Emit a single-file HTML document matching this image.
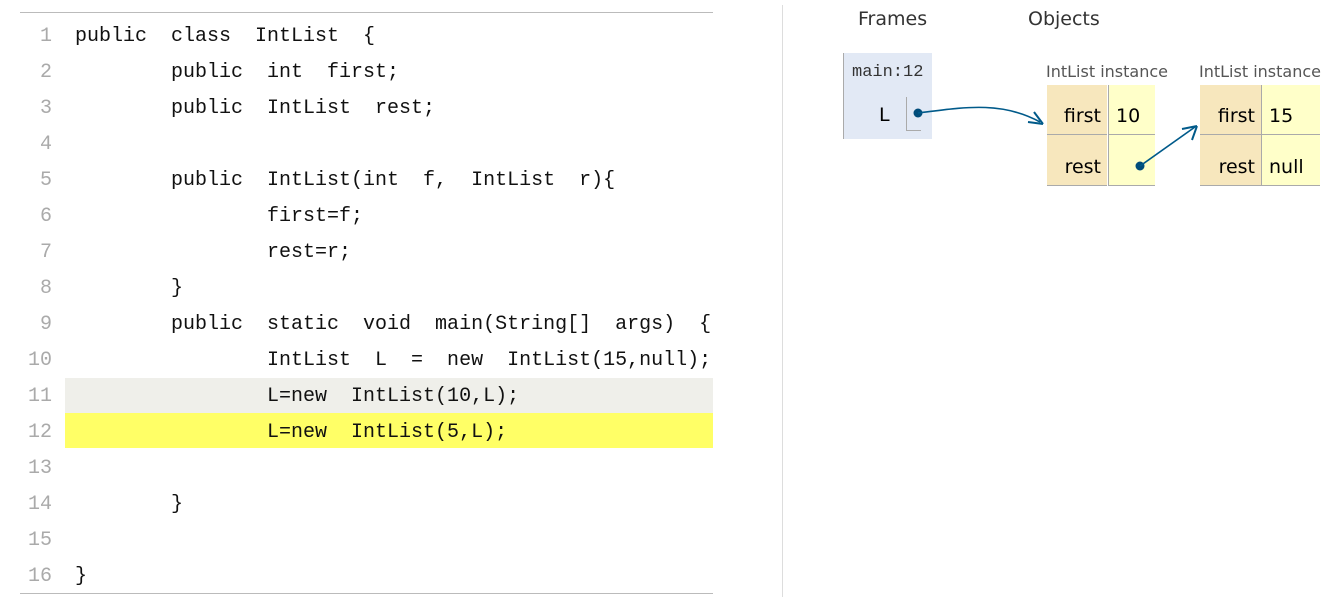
<!DOCTYPE html>
<html><head><meta charset="utf-8"><style>
body{margin:0;width:1338px;height:597px;background:#fff;position:relative;overflow:hidden;font-family:"DejaVu Sans","Liberation Sans",sans-serif}
.code{position:absolute;left:20px;top:12px;width:693px;height:580px;border-top:1px solid #bbb;border-bottom:1px solid #bbb}
.ln{position:absolute;left:0;width:693px;height:36px;line-height:36px;font-family:"Liberation Mono","Noto Serif CJK SC",monospace;font-size:20px;white-space:pre;color:#111}
.ln .n{position:absolute;left:0;width:32px;text-align:right;color:#aaa}
.ln .c{position:absolute;left:55px}
.hl{position:absolute;left:45px;width:648px;height:35px}
.a{position:absolute}
.cell{position:absolute;font-size:19px;color:#000;line-height:50px}
</style></head><body>
<div class="code">
<div class="hl" style="top:365px;background:#efefea"></div>
<div class="hl" style="top:400px;background:#ffff66"></div>
<div class="ln" style="top:6px"><span class="n">1</span><span class="c">public  class  IntList  {</span></div>
<div class="ln" style="top:42px"><span class="n">2</span><span class="c">        public  int  first;</span></div>
<div class="ln" style="top:78px"><span class="n">3</span><span class="c">        public  IntList  rest;</span></div>
<div class="ln" style="top:114px"><span class="n">4</span><span class="c"></span></div>
<div class="ln" style="top:150px"><span class="n">5</span><span class="c">        public  IntList(int  f,  IntList  r){</span></div>
<div class="ln" style="top:186px"><span class="n">6</span><span class="c">                first=f;</span></div>
<div class="ln" style="top:222px"><span class="n">7</span><span class="c">                rest=r;</span></div>
<div class="ln" style="top:258px"><span class="n">8</span><span class="c">        }</span></div>
<div class="ln" style="top:294px"><span class="n">9</span><span class="c">        public  static  void  main(String[]  args)  {</span></div>
<div class="ln" style="top:330px"><span class="n">10</span><span class="c">                IntList  L  =  new  IntList(15,null);</span></div>
<div class="ln" style="top:366px"><span class="n">11</span><span class="c">                L=new  IntList(10,L);</span></div>
<div class="ln" style="top:402px"><span class="n">12</span><span class="c">                L=new  IntList(5,L);</span></div>
<div class="ln" style="top:438px"><span class="n">13</span><span class="c"></span></div>
<div class="ln" style="top:474px"><span class="n">14</span><span class="c">        }</span></div>
<div class="ln" style="top:510px"><span class="n">15</span><span class="c"></span></div>
<div class="ln" style="top:546px"><span class="n">16</span><span class="c">}</span></div>
</div>
<div class="a" style="left:782px;top:5px;width:1px;height:592px;background:#ddd"></div>
<div class="a" style="left:858px;top:8px;font-size:19px;color:#333">Frames</div>
<div class="a" style="left:1028px;top:8px;font-size:19px;color:#333">Objects</div>
<div class="a" style="left:843px;top:53px;width:89px;height:86px;background:#e2e9f5;border-left:1px solid #aaa;box-sizing:border-box"></div>
<div class="a" style="left:852px;top:63px;font-family:'Liberation Mono',monospace;font-size:17px;color:#333">main:12</div>
<div class="a" style="left:879px;top:104px;font-size:19px">L</div>
<div class="a" style="left:906px;top:97px;width:14px;height:33px;border-left:1px solid #aaa;border-bottom:1px solid #aaa"></div>
<div class="a" style="left:1046px;top:62px;font-size:16px;color:#555">IntList instance</div>
<div class="a" style="left:1199px;top:62px;font-size:16px;color:#555">IntList instance</div>
<div class="a" style="left:1047px;top:85px;width:60px;height:49px;background:#f7e7bd;border-bottom:1px solid #aaa"></div>
<div class="a" style="left:1047px;top:135px;width:60px;height:50px;background:#f7e7bd;border-bottom:1px solid #aaa"></div>
<div class="a" style="left:1109px;top:85px;width:46px;height:49px;background:#ffffc9;border-bottom:1px solid #aaa;border-left:1px solid #aaa;margin-left:-1px"></div>
<div class="a" style="left:1109px;top:135px;width:46px;height:50px;background:#ffffc9;border-bottom:1px solid #aaa;border-left:1px solid #aaa;margin-left:-1px"></div>
<div class="a" style="left:1200px;top:85px;width:61px;height:49px;background:#f7e7bd;border-bottom:1px solid #aaa"></div>
<div class="a" style="left:1200px;top:135px;width:61px;height:50px;background:#f7e7bd;border-bottom:1px solid #aaa"></div>
<div class="a" style="left:1262px;top:85px;width:58px;height:49px;background:#ffffc9;border-bottom:1px solid #aaa;border-left:1px solid #aaa;margin-left:-1px"></div>
<div class="a" style="left:1262px;top:135px;width:58px;height:50px;background:#ffffc9;border-bottom:1px solid #aaa;border-left:1px solid #aaa;margin-left:-1px"></div>
<div class="cell" style="left:1047px;width:54px;text-align:right;top:91px">first</div>
<div class="cell" style="left:1047px;top:142px;width:54px;text-align:right">rest</div>
<div class="cell" style="left:1116px;top:91px">10</div>
<div class="cell" style="left:1200px;top:91px;width:55px;text-align:right">first</div>
<div class="cell" style="left:1200px;top:142px;width:55px;text-align:right">rest</div>
<div class="cell" style="left:1269px;top:91px">15</div>
<div class="cell" style="left:1269px;top:142px">null</div>
<svg class="a" style="left:0;top:0" width="1338" height="597">
<circle cx="918" cy="113" r="4.5" fill="#004c7a"/>
<path d="M918 113 C960 108 1000 100 1040 122" fill="none" stroke="#005a8a" stroke-width="1.6"/>
<path d="M1043 124 L1028 122 M1043 124 L1034 112" stroke="#005a8a" stroke-width="2" fill="none"/>
<circle cx="1140" cy="166" r="4.5" fill="#004c7a"/>
<path d="M1140 166 L1195 127" stroke="#005a8a" stroke-width="1.6"/>
<path d="M1197 126 L1182 129 M1197 126 L1192 140" stroke="#005a8a" stroke-width="2" fill="none"/>
</svg>
</body></html>
